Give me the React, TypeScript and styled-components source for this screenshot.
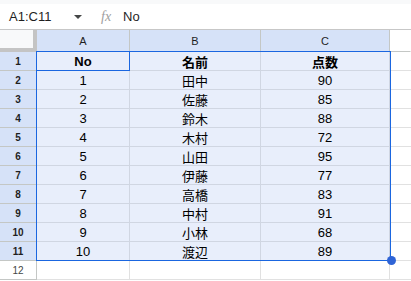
import React from "react";
import styled, { createGlobalStyle } from "styled-components";

const Global = createGlobalStyle`
  html, body { margin: 0; padding: 0; background: #fff; }
  body { font-family: "Liberation Sans", Arial, "Noto Sans CJK JP", sans-serif; overflow: hidden; }
`;

const Page = styled.div`
  width: 411px;
  height: 281px;
  display: flex;
  flex-direction: column;
  overflow: hidden;
`;

const TopStrip = styled.div`
  height: 4px;
  background: #f8f9fa;
`;

const FormulaBar = styled.div`
  height: 26px;
  display: flex;
  align-items: center;
  border-bottom: 1px solid #c7c7c7;
  box-sizing: border-box;
  font-size: 13px;
  color: #1f1f1f;
`;

const NameBox = styled.div`
  width: 90px;
  padding-left: 9px;
  display: flex;
  align-items: center;
  justify-content: space-between;
  padding-right: 8px;
  box-sizing: border-box;
`;

const Caret = styled.span`
  width: 0;
  height: 0;
  border-left: 4px solid transparent;
  border-right: 4px solid transparent;
  border-top: 4px solid #444746;
  margin-top: 1px;
`;

const Fx = styled.span`
  font-family: "Liberation Serif", "Times New Roman", serif;
  font-style: italic;
  color: #a0a0a0;
  font-size: 14px;
  margin-left: 11px;
  width: 22px;
`;

const FormulaText = styled.span`
  color: #1f1f1f;
`;

const SheetArea = styled.div`
  position: relative;
  flex: 1;
`;

const Grid = styled.div`
  display: grid;
  grid-template-columns: 37px 93px 131px 129px 1fr;
  grid-template-rows: 22px repeat(12, 19px);
`;

const Corner = styled.div`
  background: #f8f9fa;
  border-right: 4px solid #c4c4c4;
  border-bottom: 4px solid #c4c4c4;
  box-sizing: border-box;
`;

const ColHead = styled.div<{ $sel?: boolean }>`
  background: ${(p) => (p.$sel ? "#d6e2f8" : "#fff")};
  border-right: 1px solid ${(p) => (p.$sel ? "#c4c7c5" : "transparent")};
  border-bottom: 1px solid #c4c7c5;
  box-sizing: border-box;
  display: flex;
  align-items: center;
  justify-content: center;
  font-size: 11px;
  color: #1f1f1f;
`;

const RowHead = styled.div<{ $sel?: boolean }>`
  background: ${(p) => (p.$sel ? "#d6e2f8" : "#fff")};
  border-right: 1px solid #c4c7c5;
  border-bottom: 1px solid #c4c7c5;
  box-sizing: border-box;
  display: flex;
  align-items: center;
  justify-content: center;
  font-size: 10px;
  font-weight: ${(p) => (p.$sel ? 700 : 400)};
  color: ${(p) => (p.$sel ? "#1f1f1f" : "#444746")};
`;

const Cell = styled.div<{ $sel?: boolean; $bold?: boolean }>`
  background: ${(p) => (p.$sel ? "#e8eefb" : "#fff")};
  border-right: 1px solid ${(p) => (p.$sel ? "#d0d6e2" : "#e1e1e1")};
  border-bottom: 1px solid ${(p) => (p.$sel ? "#d0d6e2" : "#e1e1e1")};
  box-sizing: border-box;
  display: flex;
  align-items: center;
  justify-content: center;
  font-size: 13px;
  font-weight: ${(p) => (p.$bold ? 700 : 400)};
  color: #000;
  white-space: nowrap;
`;

const EdgeCell = styled.div`
  border-bottom: 1px solid #e1e1e1;
  box-sizing: border-box;
`;

const Selection = styled.div`
  position: absolute;
  left: 36px;
  top: 21px;
  width: 355px;
  height: 210px;
  border: 1px solid #1a66e0;
  box-sizing: border-box;
  pointer-events: none;
`;

const ActiveCell = styled.div`
  position: absolute;
  left: 36px;
  top: 21px;
  width: 94px;
  height: 20px;
  border: 1px solid #1a66e0;
  box-sizing: border-box;
  pointer-events: none;
`;

const Handle = styled.div`
  position: absolute;
  left: 387px;
  top: 226px;
  width: 9px;
  height: 9px;
  border-radius: 50%;
  background: #2f64d6;
`;

const data: [string, string, string][] = [
  ["No", "名前", "点数"],
  ["1", "田中", "90"],
  ["2", "佐藤", "85"],
  ["3", "鈴木", "88"],
  ["4", "木村", "72"],
  ["5", "山田", "95"],
  ["6", "伊藤", "77"],
  ["7", "高橋", "83"],
  ["8", "中村", "91"],
  ["9", "小林", "68"],
  ["10", "渡辺", "89"],
];

export default function App() {
  return (
    <Page>
      <Global />
      <TopStrip />
      <FormulaBar>
        <NameBox>
          <span>A1:C11</span>
          <Caret />
        </NameBox>
        <Fx>fx</Fx>
        <FormulaText>No</FormulaText>
      </FormulaBar>
      <SheetArea>
        <Grid>
          <Corner />
          <ColHead $sel>A</ColHead>
          <ColHead $sel>B</ColHead>
          <ColHead $sel>C</ColHead>
          <ColHead />
          {data.map((row, i) => (
            <React.Fragment key={i}>
              <RowHead $sel>{i + 1}</RowHead>
              {row.map((v, j) => (
                <Cell key={j} $sel $bold={i === 0}>
                  {v}
                </Cell>
              ))}
              <EdgeCell />
            </React.Fragment>
          ))}
          <RowHead>12</RowHead>
          <Cell />
          <Cell />
          <Cell />
          <EdgeCell />
        </Grid>
        <Selection />
        <ActiveCell />
        <Handle />
      </SheetArea>
    </Page>
  );
}
